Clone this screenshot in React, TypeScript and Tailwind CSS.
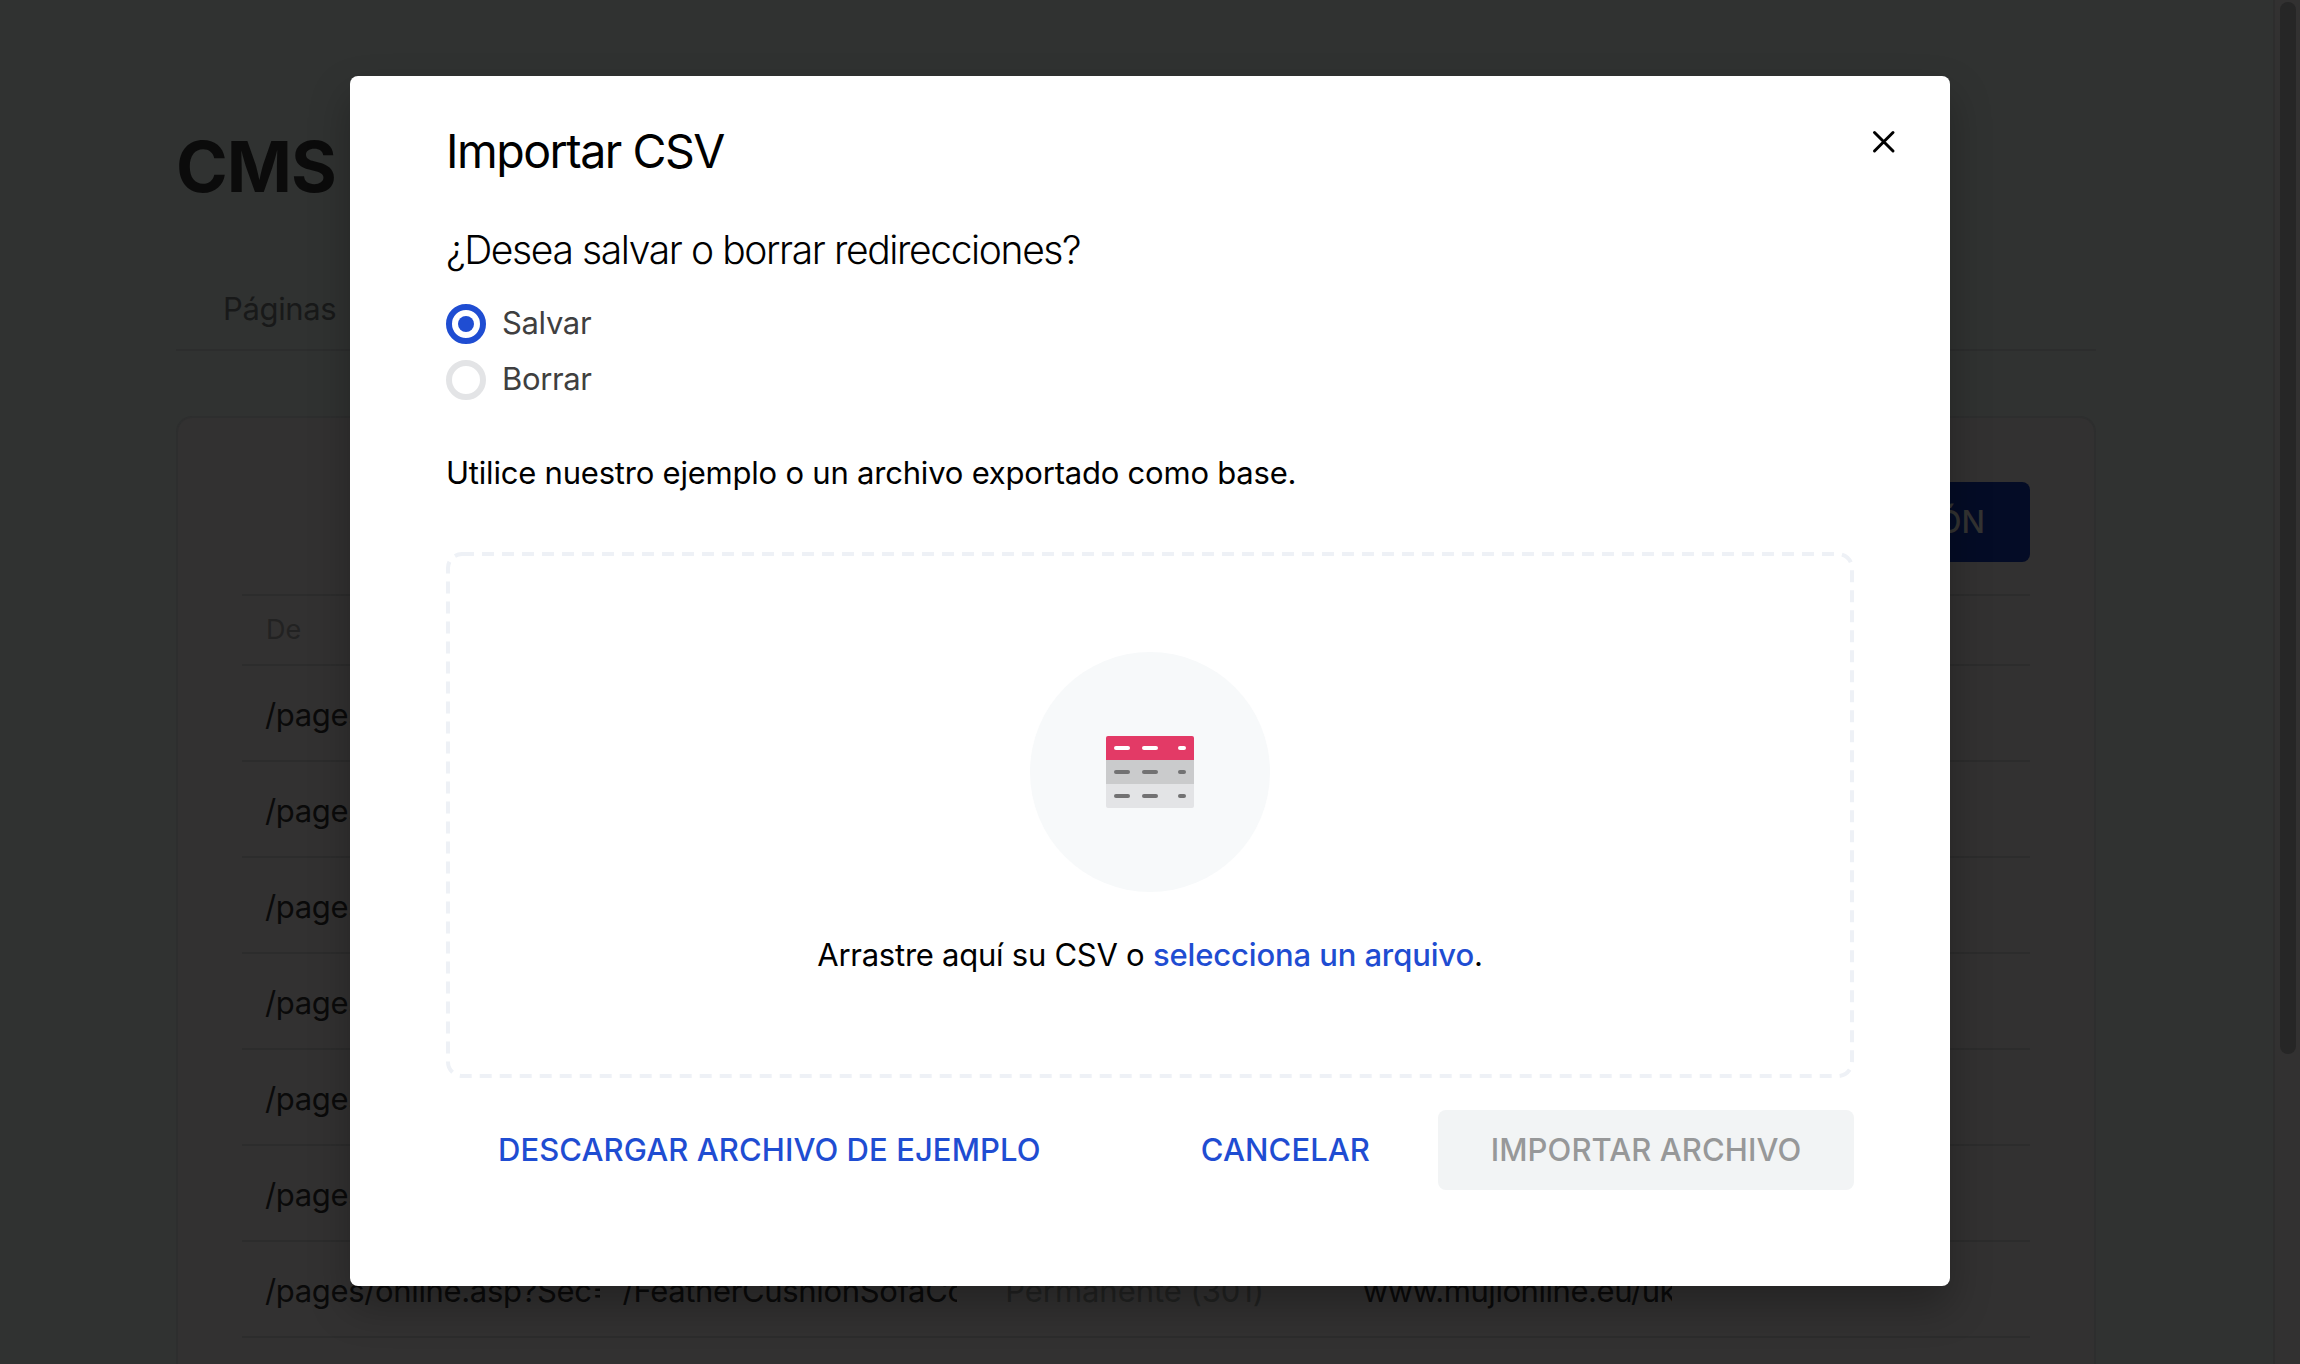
const ROWS = ['/pages/online.asp', '/pages/online.asp', '/pages/online.asp', '/pages/online.asp', '/pages/online.asp', '/pages/online.asp'];

function TableRow({ from, to, type, binding }: { from: string; to?: string; type?: string; binding?: string }) {
  return (
    <div className="grid h-24 shrink-0 grid-cols-5 items-center whitespace-nowrap border-b-2 border-[#2c2c2c] pt-1 text-[31px] leading-10 tracking-[-0.35px] text-[#0a0a0a]">
      <div className="overflow-hidden pl-[23px]">{from}</div>
      <div className="overflow-hidden pl-[23px]">{to}</div>
      <div className="overflow-hidden pl-12 tracking-[-0.05px] text-[#212221]">{type}</div>
      <div className="overflow-hidden pl-12 tracking-[-0.45px]">{binding}</div>
      <div />
    </div>
  );
}

function CmsPage() {
  return (
    <div className="flex h-full w-full">
      <main className="flex flex-1 flex-col bg-[#303231] pl-44 pr-[177px]">
        <h1 className="mt-[123px] text-[70px] font-bold leading-[88px] tracking-[-1px] text-[#0b0b0b]">CMS</h1>
        <div className="mt-[58px] flex h-[82px] shrink-0 items-center border-b-2 border-[#2c2d2d] pl-[47px] text-[31px] leading-10 tracking-[-0.35px] text-[#181919]">
          Páginas
        </div>
        <section className="mt-[65px] flex flex-1 flex-col overflow-hidden rounded-t-2xl border-2 border-b-0 border-[#2d2e2e] bg-[#323131] px-16 pt-16">
          <div className="flex justify-end">
            <div className="flex h-20 items-center rounded-lg bg-[#040c26] pl-12 pr-[45px] text-[31px] font-medium text-[#333332]">
              NUEVA REDIRECCIÓN
            </div>
          </div>
          <div className="mt-8 flex h-[72px] shrink-0 items-center border-y-2 border-[#2c2c2c] pl-6 text-[27px] text-[#222222]">
            De
          </div>
          {ROWS.map((from, i) => (
            <TableRow key={i} from={from} />
          ))}
          <TableRow
            from="/pages/online.asp?Sec=1"
            to="/FeatherCushionSofaCover"
            type="Permanente (301)"
            binding="www.mujionline.eu/uk"
          />
        </section>
      </main>
      <div className="flex w-[27px] border-l-2 border-[#2d2d2d] bg-[#323131] pl-[5px] pt-0.5">
        <div className="h-[1052px] w-4 rounded-full bg-[#262626]" />
      </div>
    </div>
  );
}

function Radio({ label, checked }: { label: string; checked?: boolean }) {
  return (
    <div className="flex h-14 items-start gap-4">
      <span
        className={
          checked
            ? 'flex size-10 items-center justify-center rounded-full border-[6px] border-[#1f4dd2]'
            : 'size-10 rounded-full border-[6px] border-[#e3e4e6]'
        }
      >
        {checked && <span className="size-4 rounded-full bg-[#1f4dd2]" />}
      </span>
      <span className="-mt-px text-[31px] leading-10 tracking-[-0.35px] text-[#3f3f40]">{label}</span>
    </div>
  );
}

function SheetIcon() {
  return (
    <svg width="88" height="72" viewBox="0 0 88 72">
      <path d="M2 0H86a2 2 0 0 1 2 2V24H0V2a2 2 0 0 1 2-2Z" fill="#e33a66" />
      <rect y="24" width="88" height="24" fill="#cacbcc" />
      <path d="M0 48H88V70a2 2 0 0 1-2 2H2a2 2 0 0 1-2-2Z" fill="#e3e4e6" />
      {[10, 34, 58].map((y) => (
        <g key={y} fill={y === 10 ? '#ffffff' : '#727273'}>
          <rect x="8" y={y} width="16" height="4" rx="2" />
          <rect x="36" y={y} width="16" height="4" rx="2" />
          <rect x="72" y={y} width="8" height="4" rx="2" />
        </g>
      ))}
    </svg>
  );
}

function DashedOutline() {
  return (
    <svg className="absolute inset-0" width="1408" height="526" viewBox="0 0 1408 526" fill="none">
      <rect x="2" y="2" width="1404" height="522" rx="14" stroke="#eef1f6" strokeWidth="4" strokeDasharray="12 8" />
    </svg>
  );
}

function ImportDialog() {
  return (
    <div className="relative flex h-[1210px] w-[1600px] flex-col rounded-lg bg-white px-24 text-black shadow-[0_20px_40px_rgba(0,0,0,0.28)]">
      <svg className="absolute right-[54px] top-[54px]" width="24" height="24" viewBox="0 0 24 24" stroke="#000" strokeWidth="3" strokeLinecap="round">
        <path d="M2.5 2.5L21 21M21 2.5L2.5 21" />
      </svg>
      <h2 className="mt-[47px] text-[46.5px] leading-[56px] tracking-[-1.5px]">Importar CSV</h2>
      <p className="mt-[47px] text-[39px] font-light leading-12 tracking-[-1.38px]">¿Desea salvar o borrar redirecciones?</p>
      <div className="mt-[30px]">
        <Radio label="Salvar" checked />
        <Radio label="Borrar" />
      </div>
      <p className="mt-[37px] text-[31px] leading-10 tracking-[-0.21px]">Utilice nuestro ejemplo o un archivo exportado como base.</p>
      <div className="relative mt-[59px] flex h-[526px] shrink-0 flex-col items-center pt-[100px]">
        <DashedOutline />
        <div className="flex size-60 items-center justify-center rounded-full bg-[#f7f9fa]">
          <SheetIcon />
        </div>
        <p className="mt-[43px] text-[31px] leading-10 tracking-[-0.25px]">
          Arrastre aquí su CSV o <span className="font-medium tracking-[-0.13px] text-[#1f4dd2]">selecciona un arquivo</span>.
        </p>
      </div>
      <div className="mt-8 flex h-20 items-center text-[31px] font-medium tracking-[0.08px] text-[#1f4dd2]">
        <span className="ml-[52px]">DESCARGAR ARCHIVO DE EJEMPLO</span>
        <span className="ml-auto mr-[68px]">CANCELAR</span>
        <span className="flex h-20 w-[416px] items-center justify-center rounded-lg bg-[#f2f4f5] text-[#979899]">IMPORTAR ARCHIVO</span>
      </div>
    </div>
  );
}

export default function App() {
  return (
    <div className="relative h-[1364px] w-[2300px] overflow-hidden font-['Inter',sans-serif]">
      <CmsPage />
      <div className="absolute inset-0 flex items-start justify-center pt-[76px]">
        <ImportDialog />
      </div>
    </div>
  );
}
